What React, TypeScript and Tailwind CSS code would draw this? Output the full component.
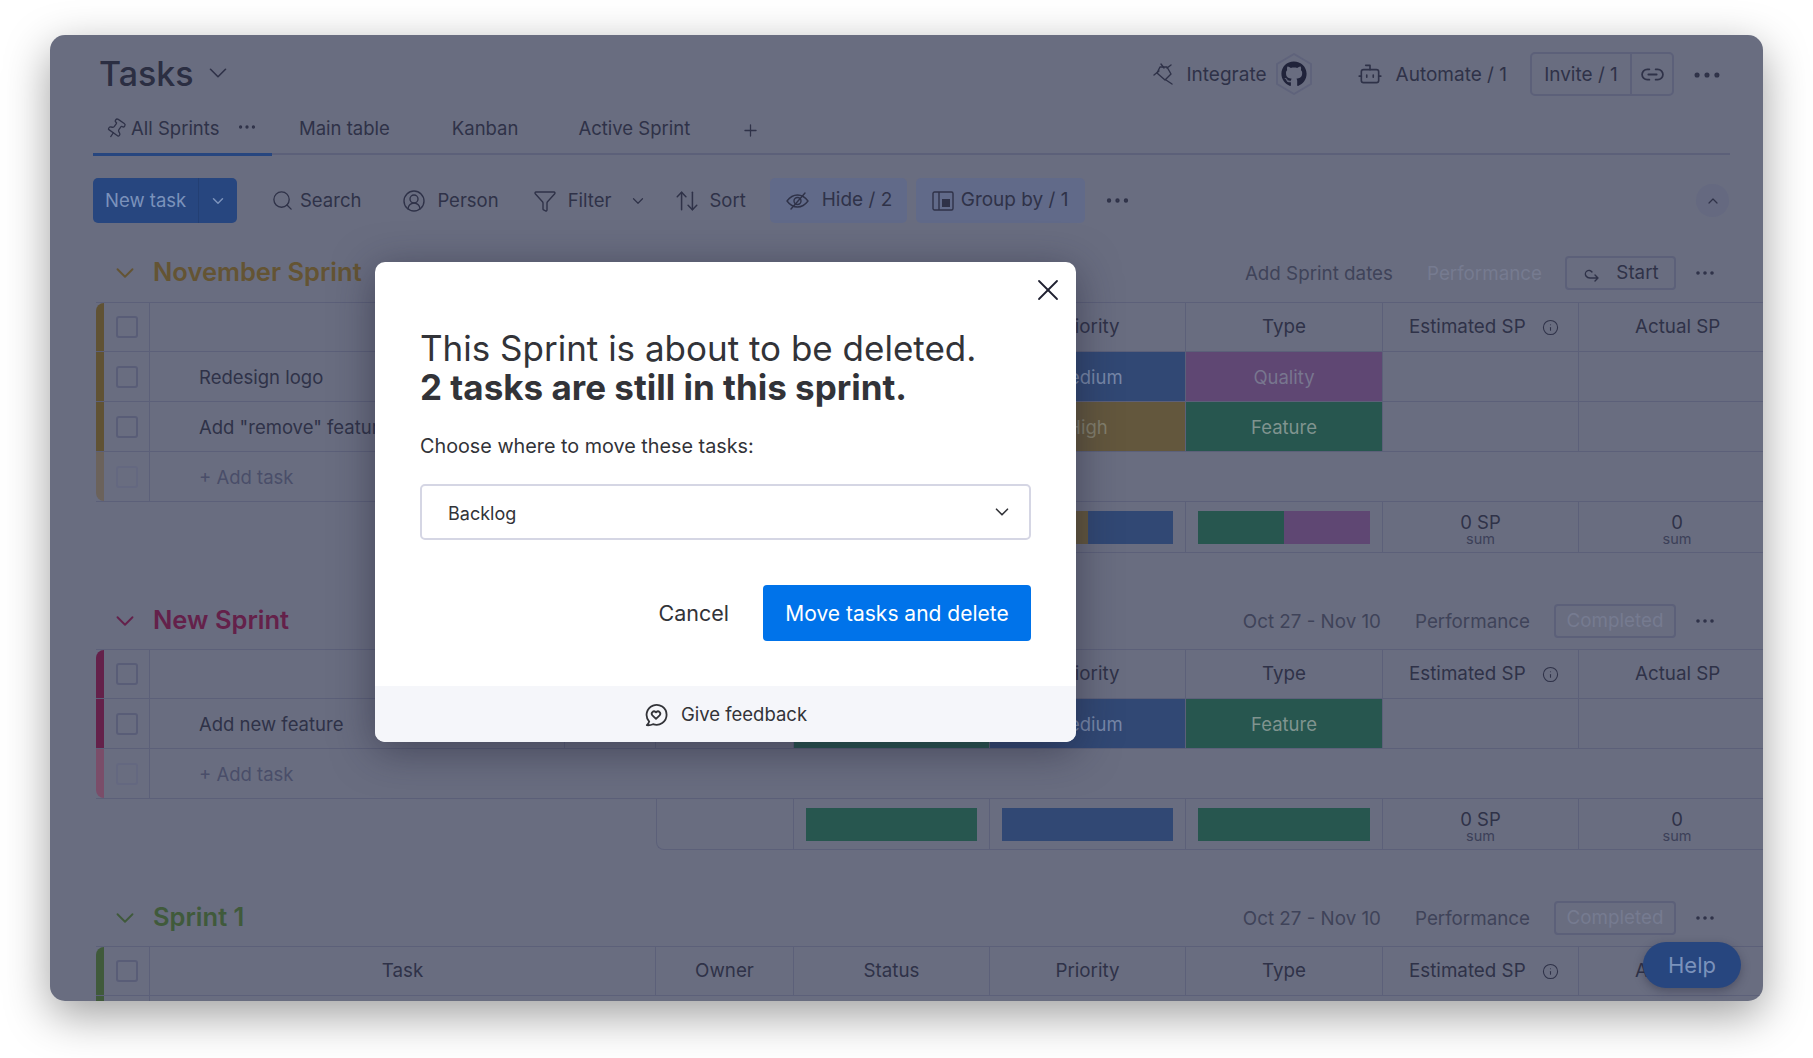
import { ReactNode } from "react";
import {
  ArrowUpDown,
  Bot,
  ChevronDown,
  ChevronUp,
  CircleUserRound,
  Ellipsis,
  Funnel,
  Info,
  Link2,
  Pin,
  Plus,
  Search,
  X,
} from "lucide-react";
import { FaGithub } from "react-icons/fa";

function PlugIcon() {
  return (
    <svg width="21" height="22" viewBox="0 0 21 22" fill="none" stroke="currentColor" strokeWidth="1.4" strokeLinecap="round" strokeLinejoin="round">
      <path d="M7 4L4 10l8 7 6-6-4-7z" />
      <path d="M1 12l5-4M8 1l3 4M13 17l6 4M14 5l4-3" />
    </svg>
  );
}

function HideIcon() {
  return (
    <svg width="23" height="18" viewBox="0 0 23 18" fill="none" stroke="currentColor" strokeWidth="1.4" strokeLinecap="round" strokeLinejoin="round">
      <path d="M1 9c3-4 6-6 10.500-6S19 5 22 9c-3 4-6 6-10.500 6S4 13 1 9z" />
      <circle cx="11.500" cy="9" r="3.500" />
      <path d="M5 17L19 1" />
    </svg>
  );
}

function GroupIcon() {
  return (
    <svg width="22" height="20" viewBox="0 0 22 20" fill="none" stroke="currentColor" strokeWidth="1.4">
      <rect x="1" y="1" width="20" height="18" rx="1.5" />
      <path d="M7 1v18" />
      <rect x="10" y="8" width="8" height="8" fill="currentColor" stroke="none" />
    </svg>
  );
}

function StartIcon() {
  return (
    <svg width="20" height="18" viewBox="0 0 20 18" fill="none" stroke="currentColor" strokeWidth="1.4" strokeLinecap="round" strokeLinejoin="round">
      <path d="M4 11a3.500 3.500 0 1 1 6-4M4 11c1 1.500 2 2 4 2h8M13 10l3 3-3 3" />
    </svg>
  );
}

function FeedbackIcon() {
  return (
    <svg width="24" height="24" viewBox="0 0 24 24" fill="none" stroke="currentColor" strokeWidth="1.8" strokeLinecap="round" strokeLinejoin="round">
      <path d="M5.200 18.600A10 10 0 1 1 9 21.200c-1.800.9-4 1.200-6.200 1 1.200-1 2-2.200 2.400-3.600z" />
      <path d="M12 15.800l-3.600-3.500a2.300 2.300 0 0 1 3.200-3.300l.4.400.4-.4a2.300 2.300 0 0 1 3.200 3.300z" />
    </svg>
  );
}

const columns = "grid grid-cols-[46px_506px_138px_196px_196px_197px_196px_196px]";
const line = "border-[#5c6079]";

function Checkbox({ faint }: { faint?: boolean }) {
  return (
    <div className={`flex h-full items-center justify-center border-r ${line}`}>
      <div className={`h-[22px] w-[22px] rounded-[3px] border-2 ${faint ? "border-[#646880]" : "border-[#595d77]"}`} />
    </div>
  );
}

function HeaderRow({ label, accent }: { label?: string; accent: string }) {
  const cells = ["Owner", "Status", "Priority", "Type"];
  return (
    <div className={`flex h-[50px] border-y ${line}`}>
      <div className={`w-[8px] shrink-0 rounded-tl-lg ${accent}`} />
      <div className={`${columns} h-full flex-1 items-center text-[18.8px] text-[#2f3248]`}>
        <Checkbox />
        <div className={`flex h-full items-center justify-center border-r ${line}`}>{label}</div>
        {cells.map((c) => (
          <div key={c} className={`flex h-full items-center justify-center border-r ${line}`}>{c}</div>
        ))}
        <div className={`flex h-full items-center gap-[16px] border-r pl-[26px] ${line}`}>
          Estimated SP
          <Info size={17} strokeWidth={1.5} />
        </div>
        <div className="flex h-full items-center pl-[56px]">Actual SP</div>
      </div>
    </div>
  );
}

function TaskRow({
  name,
  accent,
  status,
  priority,
  priorityColor,
  type,
  typeColor,
}: {
  name: string;
  accent: string;
  status: string;
  priority: string;
  priorityColor: string;
  type: string;
  typeColor: string;
}) {
  return (
    <div className={`flex h-[50px] border-b ${line}`}>
      <div className={`w-[8px] shrink-0 ${accent}`} />
      <div className={`${columns} h-full flex-1 items-center text-[18.5px] text-[#2f3248]`}>
        <Checkbox />
        <div className={`flex h-full items-center border-r ${line}`}>
          <span className="flex-1 whitespace-nowrap pl-[49px] pt-[2px]">{name}</span>
          <span className={`h-full w-[91px] border-l ${line}`} />
        </div>
        <div className={`h-full border-r ${line}`} />
        <div className={`h-full border-r ${line} ${status}`} />
        <div className={`flex h-full items-center justify-center border-r pt-[2px] ${line} ${priorityColor}`}>{priority}</div>
        <div className={`flex h-full items-center justify-center border-r pt-[2px] ${line} ${typeColor}`}>{type}</div>
        <div className={`h-full border-r ${line}`} />
        <div className="h-full" />
      </div>
    </div>
  );
}

function AddRow({ accent }: { accent: string }) {
  return (
    <div className={`flex h-[50px] border-b ${line}`}>
      <div className={`w-[8px] shrink-0 rounded-bl-lg ${accent}`} />
      <div className="w-[46px] shrink-0">
        <Checkbox faint />
      </div>
      <div className="flex items-center pl-[49px] pt-[3px] text-[18.5px] text-[#4a4e69]">+ Add task</div>
    </div>
  );
}

function Summary({ children }: { children: ReactNode[] }) {
  return (
    <div className="flex h-[51px] pl-[560px]">
      <div className={`grid flex-1 grid-cols-[137px_196px_196px_197px_196px_196px] rounded-bl-lg border-b border-l ${line}`}>
        {children}
      </div>
    </div>
  );
}

function BarCell({ parts }: { parts: string[] }) {
  return (
    <div className={`flex h-full items-center border-r px-[12px] ${line}`}>
      <div className="flex h-[33px] w-full">
        {parts.map((p) => (
          <div key={p} className={`h-full flex-1 ${p}`} />
        ))}
      </div>
    </div>
  );
}

function SumCell({ value, last }: { value: string; last?: boolean }) {
  return (
    <div className={`flex h-full flex-col items-center justify-center pt-[3px] text-[#2f3248] ${last ? "" : `border-r ${line}`}`}>
      <span className="text-[18.5px] leading-[20px]">{value}</span>
      <span className="text-[14.5px] leading-[14px] text-[#3c4058]">sum</span>
    </div>
  );
}

function SprintHead({
  title,
  color,
  dates,
  perfFaint,
  action,
}: {
  title: string;
  color: string;
  dates: string;
  perfFaint?: boolean;
  action: ReactNode;
}) {
  return (
    <div className="flex h-[34px] items-center pr-[46px]">
      <ChevronDown size={30} strokeWidth={1.5} className={`ml-[60px] ${color}`} />
      <h2 className={`ml-[13px] -translate-y-[1px] text-[25.5px] font-semibold ${color}`}>{title}</h2>
      <div className="ml-auto flex h-full items-center text-[18.8px] text-[#3f4359]">
        <span className="pt-[2px]">{dates}</span>
        <span className={`ml-[34px] pt-[2px] ${perfFaint ? "text-[#767b90]" : ""}`}>Performance</span>
        {action}
        <Ellipsis size={24} strokeWidth={1.6} className="ml-[17px] text-[#2f3248]" />
      </div>
    </div>
  );
}

const green = "bg-[#27564f]";
const blue = "bg-[#314874]";
const yellow = "bg-[#63573d]";
const purple = "bg-[#5f4773]";

function Tool({ icon, label, gap = "gap-[11px]", drop }: { icon: ReactNode; label: string; gap?: string; drop?: boolean }) {
  return (
    <div className={`flex items-center ${gap}`}>
      {icon}
      <span className={drop ? "pt-[2px]" : ""}>{label}</span>
    </div>
  );
}

const completed = (
  <div className={`ml-[24px] flex h-[34px] w-[122px] items-center justify-center rounded-[4px] border-2 pt-[1px] text-[#767b90] ${line}`}>Completed</div>
);

export default function App() {
  return (
    <div className="relative h-[1058px] w-[1813px] overflow-hidden bg-white pl-[50px] pt-[35px] font-['Inter',sans-serif] text-[#2f3248]">
      <div className="relative h-[966px] w-[1713px] overflow-hidden rounded-[15px] bg-[#696d80] shadow-[0_14px_45px_rgba(0,0,0,0.38)]">
        {/* page header */}
        <div className="flex h-[61px] items-start pl-[49px] pr-[39px] pt-[17px]">
          <div className="flex h-[44px] -translate-y-[1px] items-center gap-[9px]">
            <h1 className="text-[34px] font-medium text-[#2b2e42]">Tasks</h1>
            <ChevronDown size={30} strokeWidth={1.3} />
          </div>
          <div className="ml-auto flex h-[44px] items-center text-[19px]">
            <Tool icon={<PlugIcon />} label="Integrate" gap="gap-[13px]" drop />
            <div className="relative ml-[8px] flex h-[44px] w-[38px] items-center justify-center">
              <svg width="38" height="44" viewBox="0 0 38 44" fill="none" className="absolute inset-0">
                <path d="M19 2l17 10v20L19 42 2 32V12z" stroke="#5f637b" strokeWidth="2" strokeLinejoin="round" />
              </svg>
              <FaGithub size={26} className="relative text-[#20233a]" />
            </div>
            <div className="ml-[44px]">
              <Tool icon={<Bot size={26} strokeWidth={1.5} />} label="Automate / 1" gap="gap-[13px]" drop />
            </div>
            <div className={`ml-[23px] flex h-[44px] w-[144px] items-center rounded-[5px] border-2 ${line}`}>
              <span className="w-[98px] pt-[2px] text-center">Invite / 1</span>
              <span className={`flex h-full flex-1 items-center justify-center border-l-2 ${line}`}>
                <Link2 size={25} strokeWidth={1.7} />
              </span>
            </div>
            <Ellipsis size={34} strokeWidth={1.6} className="ml-[16px] translate-y-[1px]" />
          </div>
        </div>

        {/* view tabs */}
        <div className={`ml-[43px] mr-[33px] flex h-[59px] items-center border-b-2 pt-[9px] text-[18.5px] ${line}`}>
          <div className="relative flex h-[50px] w-[179px] items-center pl-[12px]">
            <Pin size={22} strokeWidth={1.4} className="rotate-[35deg]" />
            <span className="ml-[4px]">All Sprints</span>
            <Ellipsis size={22} strokeWidth={1.6} className="ml-[17px] -translate-y-[2px]" />
            <div className="absolute bottom-[-2px] left-0 h-[3px] w-full bg-[#27467f]" />
          </div>
          <span className="ml-[27px]">Main table</span>
          <span className="ml-[62px]">Kanban</span>
          <span className="ml-[60px]">Active Sprint</span>
          <Plus size={19} strokeWidth={1.6} className="ml-[51px] mt-[2px]" />
        </div>

        {/* toolbar */}
        <div className="mt-[23px] flex h-[45px] items-center pl-[43px] pr-[34px] text-[18.5px]">
          <div className="flex h-full w-[144px] items-center rounded-[5px] bg-[#27467f] text-[#7b92bb]">
            <span className="w-[105px] pl-[12px]">New task</span>
            <span className="flex h-full flex-1 items-center justify-center border-l border-[#233f73]">
              <ChevronDown size={18} strokeWidth={2} />
            </span>
          </div>
          <div className="ml-[34px]">
            <Tool icon={<Search size={23} strokeWidth={1.4} />} label="Search" gap="gap-[6px]" />
          </div>
          <div className="ml-[41px]">
            <Tool icon={<CircleUserRound size={24} strokeWidth={1.4} />} label="Person" />
          </div>
          <div className="ml-[34px]">
            <Tool icon={<Funnel size={24} strokeWidth={1.4} />} label="Filter" />
          </div>
          <ChevronDown size={18} strokeWidth={1.6} className="ml-[18px]" />
          <div className="ml-[27px]">
            <Tool icon={<ArrowUpDown size={26} strokeWidth={1.4} />} label="Sort" gap="gap-[9px]" />
          </div>
          <div className="ml-[24px] flex h-full w-[137px] items-center gap-[13px] rounded-[5px] bg-[#616a89] pl-[16px] text-[19px]">
            <HideIcon />
            <span>Hide / 2</span>
          </div>
          <div className="ml-[9px] flex h-full w-[169px] items-center gap-[7px] rounded-[5px] bg-[#616a89] pl-[16px] text-[19px]">
            <GroupIcon />
            <span>Group by / 1</span>
          </div>
          <Ellipsis size={29} strokeWidth={1.6} className="ml-[18px]" />
          <div className="ml-auto flex h-[33px] w-[33px] items-center justify-center rounded-full bg-[#656980]">
            <ChevronUp size={16} strokeWidth={1.8} />
          </div>
        </div>

        {/* November Sprint */}
        <div className="mt-[33px]">
          <SprintHead
            title="November Sprint"
            color="text-[#645433]"
            dates="Add Sprint dates"
            perfFaint
            action={
              <div className={`ml-[23px] flex h-[34px] w-[111px] items-center justify-center gap-[14px] rounded-[4px] border-2 pt-[1px] text-[#2f3248] ${line}`}>
                <StartIcon />
                <span>Start</span>
              </div>
            }
          />
        </div>
        <div className="mt-[12px] pl-[46px]">
          <HeaderRow accent="bg-[#605234]" />
          <TaskRow name="Redesign logo" accent="bg-[#605234]" status={green} priority="Medium" priorityColor={`${blue} text-[#7787a8]`} type="Quality" typeColor={`${purple} text-[#78768f]`} />
          <TaskRow name={'Add "remove" feature'} accent="bg-[#605234]" status={green} priority="High" priorityColor={`${yellow} text-[#827f6c]`} type="Feature" typeColor={`${green} text-[#80948f]`} />
          <AddRow accent="bg-[#6b625b]" />
          <Summary>
            <div className={`border-r ${line}`} />
            <BarCell parts={[green, purple]} />
            <BarCell parts={[yellow, blue]} />
            <BarCell parts={[green, purple]} />
            <SumCell value="0 SP" />
            <SumCell value="0" last />
          </Summary>
        </div>

        {/* New Sprint */}
        <div className="mt-[51px]">
          <SprintHead title="New Sprint" color="text-[#64214a]" dates="Oct 27 - Nov 10" action={completed} />
        </div>
        <div className="mt-[11px] pl-[46px]">
          <HeaderRow accent="bg-[#64214a]" />
          <TaskRow name="Add new feature" accent="bg-[#64214a]" status={green} priority="Medium" priorityColor={`${blue} text-[#7787a8]`} type="Feature" typeColor={`${green} text-[#80948f]`} />
          <AddRow accent="bg-[#7a4d69]" />
          <Summary>
            <div className={`border-r ${line}`} />
            <BarCell parts={[green]} />
            <BarCell parts={[blue]} />
            <BarCell parts={[green]} />
            <SumCell value="0 SP" />
            <SumCell value="0" last />
          </Summary>
        </div>

        {/* Sprint 1 */}
        <div className="mt-[51px]">
          <SprintHead title="Sprint 1" color="text-[#405a3b]" dates="Oct 27 - Nov 10" action={completed} />
        </div>
        <div className="mt-[11px] pl-[46px]">
          <HeaderRow label="Task" accent="bg-[#405a3b]" />
          <div className="flex h-[10px]">
            <div className="w-[8px] bg-[#405a3b]" />
            <div className={`w-[46px] border-r ${line}`} />
          </div>
        </div>

        {/* Help button */}
        <div className="absolute left-[1593px] top-[907px] flex h-[46px] w-[98px] items-center justify-center rounded-[23px] bg-[#27467f] text-[22px] text-[#7b92bb] shadow-[0_3px_10px_rgba(30,30,50,0.35)]">
          Help
        </div>
      </div>

      {/* delete dialog */}
      <div className="absolute left-[375px] top-[262px] flex h-[480px] w-[701px] flex-col overflow-hidden rounded-[10px] bg-white text-[#323338] shadow-[0_8px_42px_rgba(30,30,50,0.5)]">
        <div className="relative flex-1 px-[45px] pt-[67px]">
          <X size={36} strokeWidth={1.2} className="absolute right-[10px] top-[10px] text-[#1f2030]" />
          <h2 className="text-[35px] leading-[39px]">
            This Sprint is about to be deleted.
            <br />
            <b className="font-bold">2 tasks are still in this sprint.</b>
          </h2>
          <p className="mt-[25px] text-[19.8px] leading-[28px]">Choose where to move these tasks:</p>
          <div className="mt-[24px] flex h-[56px] items-center justify-between rounded-[5px] border-2 border-[#d5d6e4] pl-[26px] pr-[16px] text-[18px]">
            <span className="pt-[2px]">Backlog</span>
            <ChevronDown size={22} strokeWidth={1.8} />
          </div>
          <div className="mt-[45px] flex items-center justify-end">
            <span className="text-[21.5px]">Cancel</span>
            <button className="ml-[34px] flex h-[56px] w-[268px] items-center justify-center rounded-[4px] bg-[#0073ea] pt-[1px] text-[21px] text-white">
              Move tasks and delete
            </button>
          </div>
        </div>
        <div className="flex h-[56px] items-center justify-center gap-[13px] bg-[#f5f6fa] pt-[2px] text-[18.5px]">
          <FeedbackIcon />
          Give feedback
        </div>
      </div>
    </div>
  );
}
